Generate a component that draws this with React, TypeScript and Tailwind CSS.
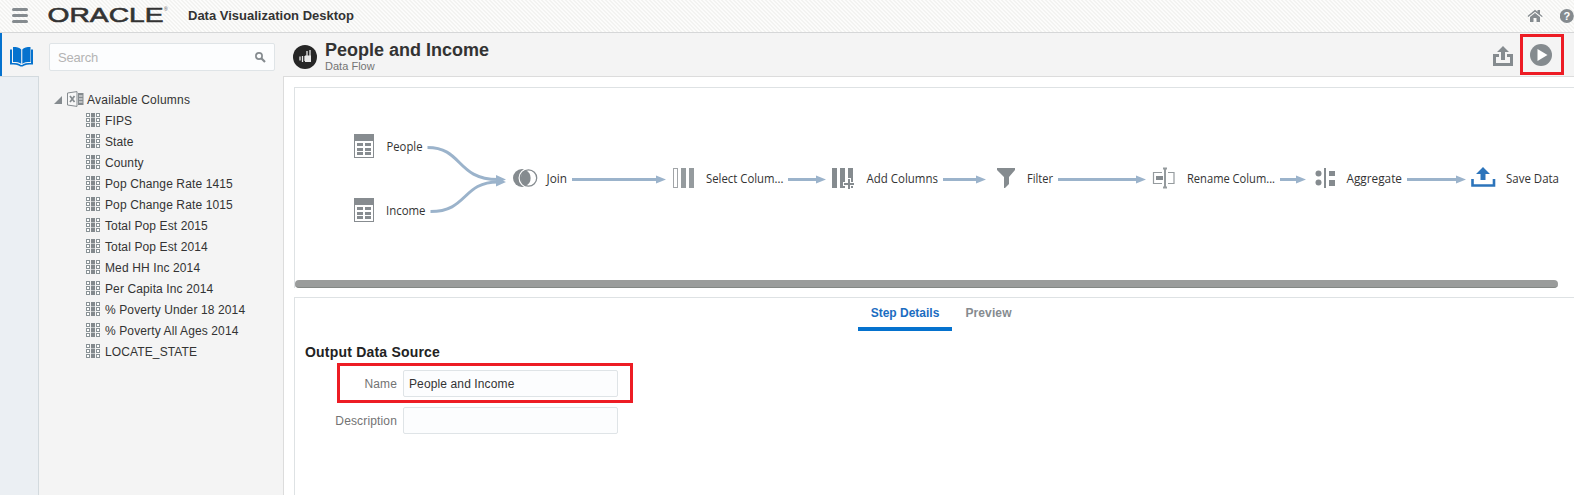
import React from "react";

const columns = [
  "FIPS",
  "State",
  "County",
  "Pop Change Rate 1415",
  "Pop Change Rate 1015",
  "Total Pop Est 2015",
  "Total Pop Est 2014",
  "Med HH Inc 2014",
  "Per Capita Inc 2014",
  "% Poverty Under 18 2014",
  "% Poverty All Ages 2014",
  "LOCATE_STATE",
];

const labels = [
  { x: 386.5, y: 138, w: 36, text: "People" },
  { x: 386, y: 202, w: 39.5, text: "Income" },
  { x: 546.5, y: 170, w: 20.5, text: "Join" },
  { x: 706, y: 170, w: 77.5, text: "Select Colum..." },
  { x: 866.5, y: 170, w: 71.5, text: "Add Columns" },
  { x: 1027, y: 170, w: 26, text: "Filter" },
  { x: 1187, y: 170, w: 88, text: "Rename Colum..." },
  { x: 1346.5, y: 170, w: 55.5, text: "Aggregate" },
  { x: 1506, y: 170, w: 53, text: "Save Data" },
];

const arrows = [
  [572, 666],
  [788, 826],
  [943, 986],
  [1058, 1146],
  [1280, 1306],
  [1407, 1466],
];

function ColumnIcon() {
  return (
    <svg width="14" height="14" viewBox="0 0 14 14" shapeRendering="crispEdges" className="-mt-px shrink-0">
      <rect x="5" width="4" height="14" fill="#c3c7c9" />
      {[0, 5, 10].map((y) => (
        <g key={y}>
          <rect x="0.5" y={y + 0.5} width="3" height="3" fill="#fff" stroke="#899296" />
          <rect x="5" y={y} width="4" height="4" fill="#83898d" />
          <rect x="10.5" y={y + 0.5} width="3" height="3" fill="#fff" stroke="#899296" />
        </g>
      ))}
    </svg>
  );
}

function TableNode({ x, y }: { x: number; y: number }) {
  return (
    <g transform={`translate(${x} ${y})`} shapeRendering="crispEdges">
      <rect width="20" height="24" fill="#878c90" />
      <rect x="1" y="7" width="18" height="16" fill="#fff" />
      {[9, 14, 18].map((r) => (
        <g key={r} fill="#878c90">
          <rect x="3" y={r} width="6" height="3" />
          <rect x="11" y={r} width="6" height="3" />
        </g>
      ))}
    </g>
  );
}

function FlowDiagram() {
  return (
    <svg width="1279" height="192" viewBox="295 88 1279 192" className="block">
      <TableNode x={354} y={134} />
      <TableNode x={354} y={198} />
      <g fill="none" stroke="#9bb3cb" strokeWidth="3">
        <path d="M427.500 147.500C463 147.500 456 179.500 498 179.500" />
        <path d="M430.500 211.500C468 211.500 462 182 498 182" />
        {arrows.map(([a, b]) => (
          <path key={a} d={`M${a} 179.500H${b - 8}`} />
        ))}
      </g>
      <g fill="#9bb3cb">
        <path d="M496 175l10 4.500-10 4.500zM496 177.500l10 4.500-10 4.500z" />
        {arrows.map(([a, b]) => (
          <path key={a} d={`M${b - 10} 175.500l10 4-10 4z`} />
        ))}
      </g>
      <circle cx="522" cy="178" r="9" fill="#858b8f" />
      <circle cx="528.500" cy="178" r="10" fill="#fff" />
      <circle cx="528.500" cy="178" r="8.200" fill="none" stroke="#858b8f" strokeWidth="1.300" />
      <path d="M525.500 170a8.800 8.800 0 0 1 0 16a9.200 9.200 0 0 1 0-16z" fill="#858b8f" />
      <g shapeRendering="crispEdges">
        <rect x="673.500" y="168.500" width="4" height="19" fill="#fff" stroke="#a1a5a8" />
        <rect x="681" y="168" width="5" height="20" fill="#959b9e" />
        <rect x="689" y="168" width="5" height="20" fill="#959b9e" />
        <rect x="832" y="168" width="5" height="20" fill="#858b8f" />
        <rect x="840" y="168" width="5" height="20" fill="#858b8f" />
        <rect x="848" y="168" width="5" height="20" fill="#858b8f" />
      </g>
      <path d="M849 178v11M843 184h11" stroke="#fff" strokeWidth="4" />
      <path d="M849 179v10M844 184h10" stroke="#858b8f" strokeWidth="2" />
      <path d="M997 168h18v2l-6 7v7l-4 4h-1v-11l-7-7z" fill="#858b8f" />
      <g fill="none" stroke="#959b9e">
        <path d="M1162 172.500h-8.500v11h8.500M1168 172.500h6v11h-6" strokeWidth="1.200" />
        <path d="M1163 168.500h4M1163 187.500h4M1165 168v20" strokeWidth="2" />
      </g>
      <rect x="1156" y="176" width="7" height="4" fill="#858b8f" />
      <g fill="#858b8f">
        <circle cx="1318.500" cy="173.500" r="3" />
        <circle cx="1318.500" cy="182.500" r="3" />
        <rect x="1324" y="168" width="2" height="20" />
        <rect x="1329" y="171" width="6" height="5" />
        <rect x="1329" y="180" width="6" height="6" />
      </g>
      <path d="M1483 167l7 7h-4.500v6h-5v-6H1476z" fill="#2c74bb" />
      <path d="M1472.500 179v6.500h21.500v-6.500" fill="none" stroke="#2c74bb" strokeWidth="2.600" />
      <g fill="#333" fontFamily="'Open Sans', 'Noto Sans', sans-serif" fontSize="12">
        {labels.map((l) => (
          <text key={l.text} x={l.x} y={l.y + 13} textLength={l.w} lengthAdjust="spacingAndGlyphs">
            {l.text}
          </text>
        ))}
      </g>
    </svg>
  );
}

export default function App() {
  return (
    <div className="relative flex h-[495px] w-[1574px] flex-col overflow-hidden bg-[#f4f4f4] font-['Liberation_Sans',Arial,sans-serif] text-[12px] text-[#333]">
      <header className="flex h-[33px] shrink-0 items-center border-b border-[#d6d7d8] bg-[linear-gradient(45deg,#f3f3f1_25%,#fcfcfb_25%,#fcfcfb_50%,#f3f3f1_50%,#f3f3f1_75%,#fcfcfb_75%)] bg-[length:4px_4px] pl-3">
        <svg width="16" height="16" viewBox="0 0 16 16" className="shrink-0">
          <path d="M1.500 1.500h13M1.500 7.500h13M1.500 13.500h13" stroke="#858b8f" strokeWidth="3" strokeLinecap="round" />
        </svg>
        <svg width="122" height="32" viewBox="0 0 122 32" className="ml-5 shrink-0" aria-label="Oracle">
          <text x="-0.500" y="22" fontSize="21" fontFamily="'Liberation Sans', Arial, sans-serif" fill="#333" stroke="#333" strokeWidth="0.600" textLength="116" lengthAdjust="spacingAndGlyphs">ORACLE</text>
          <text x="116" y="10.500" fontSize="5" fill="#555">®</text>
        </svg>
        <h1 className="ml-[18px] grow text-[13px] font-bold leading-4">Data Visualization Desktop</h1>
        <svg width="16" height="14" viewBox="0 0 16 14" className="mr-[17px] shrink-0">
          <path d="M0.500 7L8 .8l2.500 2V1H13v4l2.700 2.200-.8.900L8 2.700 1.300 8z" fill="#858b8f" />
          <path d="M3 8l5-4 5 4v5H9.500V9h-3v4H3z" fill="#858b8f" />
        </svg>
        <svg width="14" height="15" viewBox="0 0 14 15" className="shrink-0">
          <circle cx="6.800" cy="7" r="7" fill="#858b8f" />
          <text x="6.800" y="11" textAnchor="middle" fontSize="11" fontWeight="bold" fill="#fff">?</text>
        </svg>
      </header>

      <div className="flex min-h-0 flex-1">
        <nav className="flex w-[39px] shrink-0 flex-col">
          <div className="flex h-11 shrink-0 items-center border-l-2 border-[#0572ce] pl-2 pt-[3px]">
            <svg width="24" height="22" viewBox="0 0 24 22">
              <path d="M0 3.500h2V17c4 0 7 .2 9 2h1c2-1.800 5-2 9-2V3.500h2V18.500c-5 0-8 .3-10.500 2h-2C8 18.800 5 18.500 0 18.500z" fill="#0572ce" />
              <path d="M3 1c3.800 0 6.500.5 8.200 2.500v14.300C9.500 16.300 7 16 3 16zM20.500 1c-3.800 0-6.500.5-8.200 2.500v14.300c1.700-1.500 4.200-1.800 8.200-1.800z" fill="#0572ce" />
            </svg>
          </div>
          <div className="-mt-px flex-1 border-r border-t border-[#d3dade] bg-[#ebeff3]" />
        </nav>

        <aside className="w-[244px] shrink-0">
          <div className="ml-[10px] mt-[10px] flex h-7 w-[226px] items-center justify-between rounded-[2px] border border-[#dfe4e7] bg-[#fcfdfe] pl-2 pr-2">
            <span className="pt-px text-[13px] tracking-[-0.2px] text-[#b4b4b4]">Search</span>
            <svg width="11" height="11" viewBox="0 0 11 11">
              <circle cx="4" cy="4" r="3.100" fill="none" stroke="#858b8f" strokeWidth="1.700" />
              <path d="M6.300 6.300l3.700 3.700" stroke="#858b8f" strokeWidth="2.200" />
            </svg>
          </div>
          <div className="mt-[18px] flex h-[21px] items-center pl-[15px]">
            <svg width="8" height="8" viewBox="0 0 8 8"><path d="M8 0v8H0z" fill="#858b8f" /></svg>
            <svg width="17" height="16" viewBox="0 0 17 16" className="-mt-px ml-[5px]">
              <path d="M.5 2L10 .6v14.800L.5 14z" fill="#f7f7f7" stroke="#858b8f" />
              <path d="M3 5l4.500 6M7.500 5L3 11" stroke="#858b8f" strokeWidth="1.700" />
              <rect x="11" y="2" width="5.500" height="12" fill="#858b8f" />
              <path d="M12 5h3.500M12 8h3.500M12 11h3.500" stroke="#f4f4f4" />
            </svg>
            <span className="ml-[3px] text-[12px] tracking-[0.24px]">Available Columns</span>
          </div>
          <ul>
            {columns.map((c) => (
              <li key={c} className="flex h-[21px] items-center pl-[47px]">
                <ColumnIcon />
                <span className="ml-[5px] text-[12px] tracking-[0.12px]">{c}</span>
              </li>
            ))}
          </ul>
        </aside>

        <main className="flex min-w-0 flex-1 flex-col">
          <div className="flex h-[43px] shrink-0 items-center pl-[10px]">
            <svg width="24" height="24" viewBox="0 0 24 24" className="mt-[5px] shrink-0">
              <circle cx="12" cy="12" r="12" fill="#262626" />
              <path d="M7 15.500v-4M9.500 17v-6M12 16v-5M14 17V6M17 17V5" stroke="#e8e8e8" strokeWidth="1.300" />
              <path d="M12 10.500h6V17h-6z" fill="#e8e8e8" />
            </svg>
            <div className="ml-2 grow pt-[5px]">
              <h2 className="text-[18px] font-bold leading-[18px]">People and Income</h2>
              <p className="text-[11px] leading-[14px] tracking-[0.02px] text-[#737373]">Data Flow</p>
            </div>
            <svg width="20" height="20" viewBox="0 0 20 20" className="mr-[7px] mt-0.5 shrink-0">
              <path d="M10 0l6 6h-4v8H8V6H4z" fill="#858b8f" />
              <path d="M6 9.500H1.500v9h17v-9H14" fill="none" stroke="#858b8f" strokeWidth="3" />
            </svg>
            <div className="mr-[10px] flex h-[41px] w-11 shrink-0 items-center justify-center border-[3px] border-[#ed1c24] pr-[2px] pt-px">
              <svg width="22" height="22" viewBox="0 0 22 22">
                <circle cx="11" cy="11" r="11" fill="#858b8f" />
                <path d="M7.500 5l10 6-10 6z" fill="#fff" />
              </svg>
            </div>
          </div>

          <div className="flex min-h-0 flex-1 flex-col border-l border-t border-[#dcdcdc] bg-white pl-[10px] pt-[10px]">
            <section className="h-[201px] shrink-0 border-l border-t border-[#dee2e4]">
              <FlowDiagram />
              <div className="h-2 w-[1263px] rounded-full border-b border-[#838784] bg-[#9a9c9b]" />
            </section>
            <section className="mt-[9px] flex-1 border-l border-t border-[#dee2e4]">
              <div className="ml-[563px] flex h-[33px] text-[12px] font-bold">
                <div className="flex h-[33px] w-[94px] justify-center border-b-4 border-[#0572ce] pt-[6px] text-[#1b6dc1]">Step Details</div>
                <div className="w-[73px] pt-[6px] text-center tracking-[0.12px] text-[#858b8f]">Preview</div>
              </div>
              <h3 className="ml-[10px] mt-[12px] text-[14px] font-bold leading-[18px] tracking-[0.2px] text-[#222]">Output Data Source</h3>
              <div className="ml-[42px] mt-[2px] flex h-10 w-[296px] items-center border-[3px] border-[#ed1c24]">
                <label className="w-[57px] pt-px text-right tracking-[0.15px] text-[#737373]">Name</label>
                <div className="ml-[6px] flex h-[27px] w-[215px] items-center rounded-[2px] border border-[#dfe4e7] bg-[#fcfdfe] pl-[5px] pt-px tracking-[0.12px]">People and Income</div>
              </div>
              <div className="ml-[32px] mt-1 flex items-center">
                <label className="w-[70px] text-right tracking-[0.15px] text-[#737373]">Description</label>
                <div className="ml-[6px] h-[27px] w-[215px] rounded-[2px] border border-[#dfe4e7] bg-[#fcfdfe]" />
              </div>
            </section>
          </div>
        </main>
      </div>
    </div>
  );
}
